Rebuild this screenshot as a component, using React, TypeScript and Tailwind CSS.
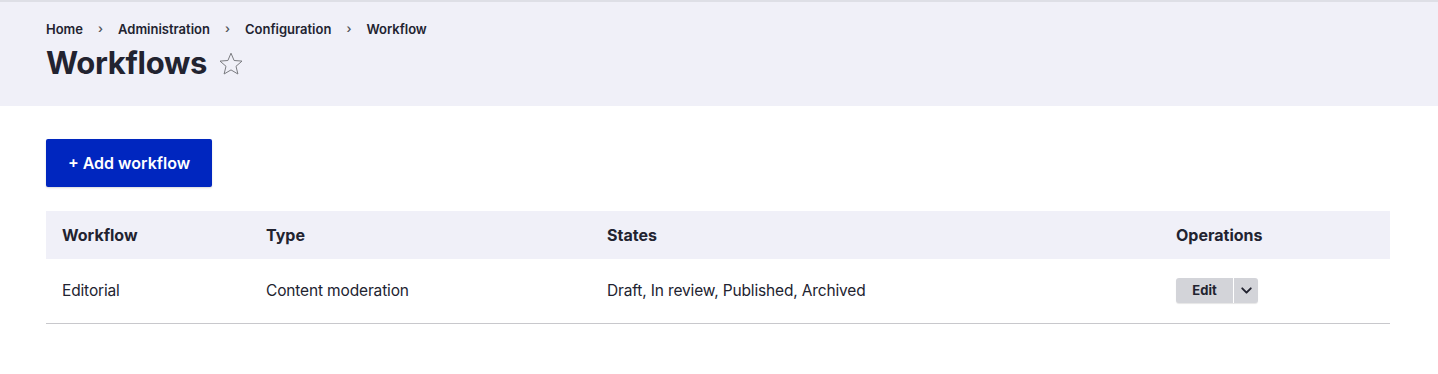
import { ChevronDown } from 'lucide-react';

const crumbs = ['Home', 'Administration', 'Configuration', 'Workflow'];

const rows = [
  { name: 'Editorial', type: 'Content moderation', states: 'Draft, In review, Published, Archived' },
];

export default function App() {
  return (
    <div className="min-h-[374px] bg-white text-[#222330] font-['Inter',sans-serif]">
      <header className="border-t-2 border-[#dedfe6] bg-[#f0f0f8] px-[46px] pt-[18px] h-[106px]">
        <nav className="flex items-center text-[13px] font-semibold leading-[18px]">
          {crumbs.map((c, i) => (
            <span key={c} className="flex items-center">
              {i > 0 && <span className="mx-[15px] text-[12px] text-[#55565b]">›</span>}
              <span>{c}</span>
            </span>
          ))}
        </nav>
        <div className="mt-[5px] flex items-center">
          <h1 className="text-[31px] font-bold leading-[40px] tracking-[-0.3px]">Workflows</h1>
          <svg className="ml-[12px] mt-[1px]" width="24" height="24" viewBox="0 0 24 24" fill="none">
            <path
              d="M12 1.2l3.1 7.3 7.9.6-6 5.2 1.9 7.7L12 17.9 5.1 22l1.9-7.7-6-5.2 7.9-.6z"
              stroke="#7a7b80"
              strokeWidth="1"
              strokeLinejoin="miter"
            />
          </svg>
        </div>
      </header>

      <main className="px-[46px] pt-[33px]">
        <button className="h-[48px] w-[166px] rounded-[2px] bg-[#0026bf] px-[21px] text-[16px] font-semibold text-white shadow-[0_1px_2px_rgba(0,0,0,0.15)]">
          + Add workflow
        </button>

        <table className="mt-[24px] w-[1344px] table-fixed border-collapse text-left text-[16px]">
          <thead>
            <tr className="h-[48px] bg-[#f0f0f8]">
              <th className="w-[204px] pl-[16px] font-bold">Workflow</th>
              <th className="w-[341px] pl-[16px] font-bold">Type</th>
              <th className="w-[569px] pl-[16px] font-bold">States</th>
              <th className="pl-[16px] font-bold">Operations</th>
            </tr>
          </thead>
          <tbody>
            {rows.map((r) => (
              <tr key={r.name} className="h-[64px] border-b border-[#c8c8cc] text-[15.5px] tracking-[-0.15px]">
                <td className="pl-[16px]">{r.name}</td>
                <td className="pl-[16px]">{r.type}</td>
                <td className="pl-[16px]">{r.states}</td>
                <td className="pl-[16px] tracking-normal">
                  <div className="inline-flex h-[25px] items-stretch overflow-hidden rounded-[3px] bg-[#d3d4d9] align-middle shadow-[0_1px_1px_rgba(0,0,0,0.1)]">
                    <span className="flex w-[57px] items-center justify-center text-[13px] font-bold">Edit</span>
                    <span className="w-px bg-white" />
                    <span className="flex w-[24px] items-center justify-center">
                      <ChevronDown size={17} strokeWidth={2.75} />
                    </span>
                  </div>
                </td>
              </tr>
            ))}
          </tbody>
        </table>
      </main>
    </div>
  );
}
